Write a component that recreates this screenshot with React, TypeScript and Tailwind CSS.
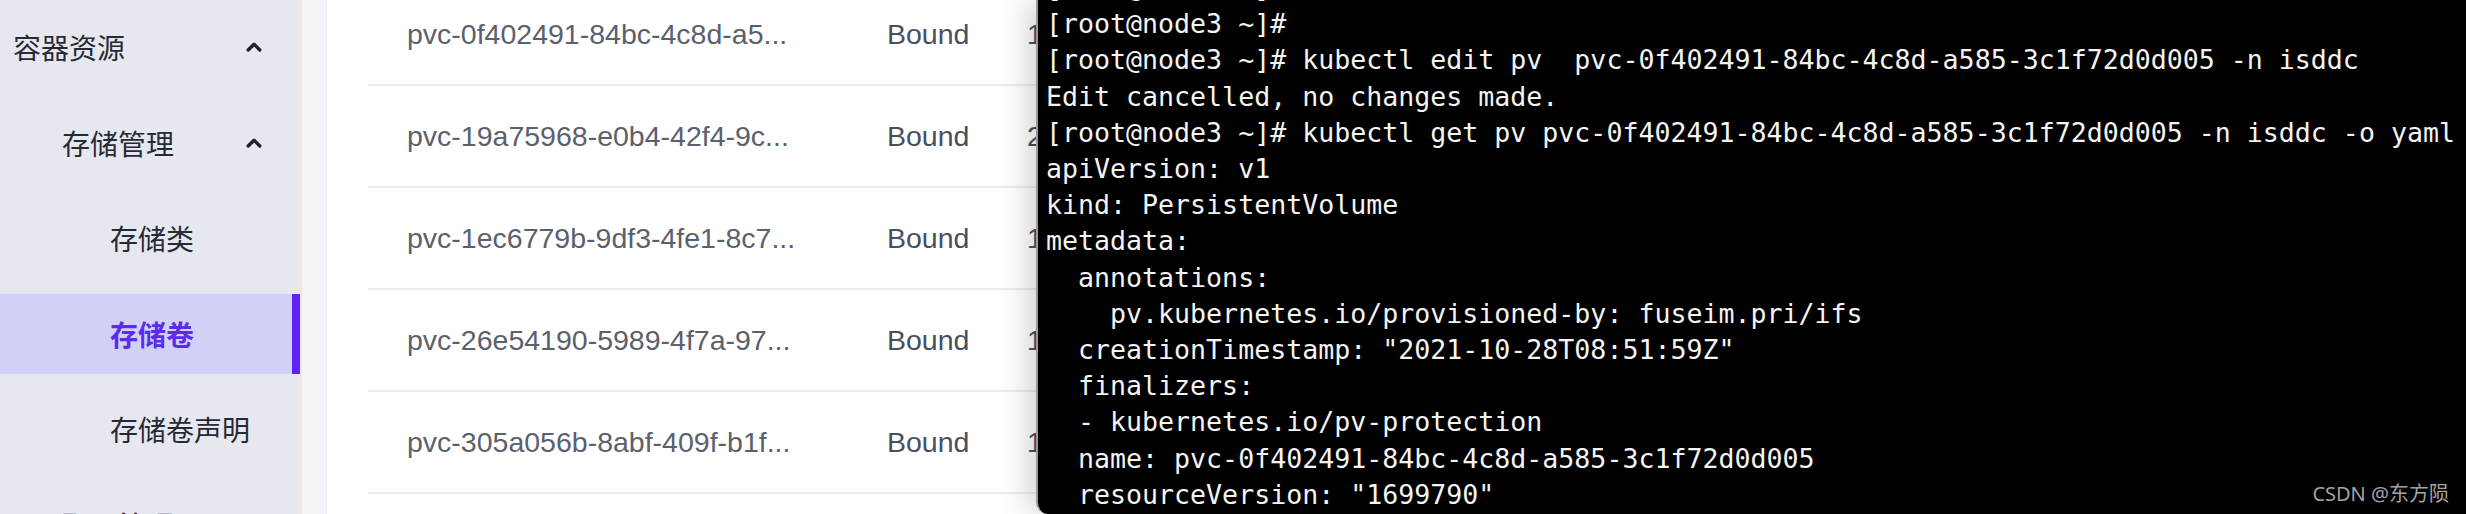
import React from "react";

const Chevron = () => (
  <svg width="16" height="10" viewBox="0 0 16 10" fill="none">
    <polyline points="2.2,8 8,2.2 13.8,8" stroke="#1f2330" strokeWidth="3.4" strokeLinecap="round" strokeLinejoin="round" />
  </svg>
);

const rows = [
  ["pvc-0f402491-84bc-4c8d-a5...", "1Gi"],
  ["pvc-19a75968-e0b4-42f4-9c...", "2Gi"],
  ["pvc-1ec6779b-9df3-4fe1-8c7...", "1Gi"],
  ["pvc-26e54190-5989-4f7a-97...", "1Gi"],
  ["pvc-305a056b-8abf-409f-b1f...", "1Gi"],
  ["pvc-3a1b2c4d-77e1-4b2a-8d...", "1Gi"],
];

const lines = [
  "[root@node3 ~]#",
  "[root@node3 ~]#",
  "[root@node3 ~]# kubectl edit pv  pvc-0f402491-84bc-4c8d-a585-3c1f72d0d005 -n isddc",
  "Edit cancelled, no changes made.",
  "[root@node3 ~]# kubectl get pv pvc-0f402491-84bc-4c8d-a585-3c1f72d0d005 -n isddc -o yaml",
  "apiVersion: v1",
  "kind: PersistentVolume",
  "metadata:",
  "  annotations:",
  "    pv.kubernetes.io/provisioned-by: fuseim.pri/ifs",
  '  creationTimestamp: "2021-10-28T08:51:59Z"',
  "  finalizers:",
  "  - kubernetes.io/pv-protection",
  "  name: pvc-0f402491-84bc-4c8d-a585-3c1f72d0d005",
  '  resourceVersion: "1699790"',
];

export default function App() {
  return (
    <div className="relative flex w-[2466px] h-[514px] overflow-hidden bg-white">
      {/* Sidebar */}
      <div
        className="w-[302px] shrink-0 h-full bg-[#e7e7f0] border-r-2 border-[#f0e4ea] flex flex-col gap-[15.5px] pt-[7px] text-[28px] leading-none text-[#262a35]"
        style={{ fontFamily: '"Noto Sans CJK SC", "Noto Sans", sans-serif' }}
      >
        <div className="h-[80px] shrink-0 flex items-center justify-between pl-[13px] pr-[38px]">
          <span>容器资源</span>
          <Chevron />
        </div>
        <div className="h-[80px] shrink-0 flex items-center justify-between pl-[62px] pr-[38px]">
          <span>存储管理</span>
          <Chevron />
        </div>
        <div className="h-[80px] shrink-0 flex items-center pl-[110px]">
          <span>存储类</span>
        </div>
        <div className="h-[80px] shrink-0 flex items-center pl-[110px] bg-[#d1d1f8] border-r-[8px] border-[#5b25f5] text-[#5b2cf0] font-bold">
          <span>存储卷</span>
        </div>
        <div className="h-[80px] shrink-0 flex items-center pl-[110px]">
          <span>存储卷声明</span>
        </div>
        <div className="h-[80px] shrink-0 flex items-center pl-[62px] font-medium">
          <span>配置管理</span>
        </div>
      </div>

      {/* light strip */}
      <div className="w-[25px] shrink-0 h-full bg-[#f3f4f8] border-r border-[#eceef3]" />

      {/* Table */}
      <div
        className="flex-1 h-full pl-[41px] -mt-[16px]"
        style={{ fontFamily: '"Liberation Sans", Arial, sans-serif' }}
      >
        {rows.map(([name, cap], i) => (
          <div key={i} className="h-[102px] flex items-center border-b-2 border-[#ebecf0] text-[28.5px]">
            <div className="w-[519px] pl-[39px] text-[#5b5f6e] whitespace-nowrap">{name}</div>
            <div className="w-[140px] text-[#4a4e5e]">Bound</div>
            <div className="text-[#4a4e5e]">{cap}</div>
          </div>
        ))}
      </div>

      {/* Terminal window overlay */}
      <div className="absolute left-[1036px] top-0 right-0 bottom-0 bg-black rounded-bl-[12px] border-l-2 border-[#9a9a9a] shadow-[-10px_0_28px_rgba(0,0,0,0.16)] overflow-hidden">
        <div
          className="-mt-[30px] pl-[8px] text-[26.6px] leading-[36.2px] text-[#f4f4f4] whitespace-pre"
          style={{ fontFamily: '"DejaVu Sans Mono", "Liberation Mono", monospace' }}
        >
          {lines.map((l, i) => (
            <div key={i}>{l}</div>
          ))}
        </div>
        <div
          className="absolute right-[17px] bottom-[6px] text-[20px] leading-[28px] text-[#a4a4a4]"
          style={{ fontFamily: '"Noto Sans", "Noto Sans CJK SC", sans-serif' }}
        >
          CSDN @东方陨
        </div>
      </div>
    </div>
  );
}
